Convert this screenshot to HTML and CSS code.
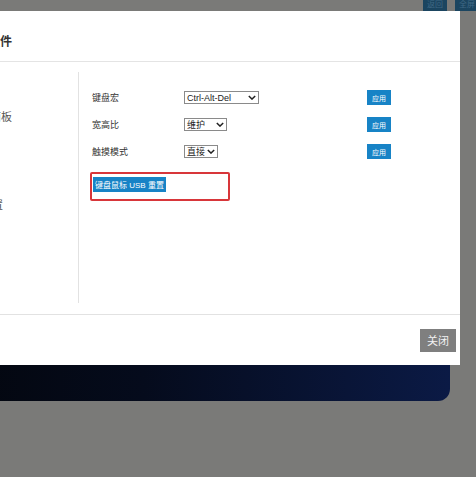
FILE: index.html
```html
<!DOCTYPE html>
<html lang="zh">
<head>
<meta charset="utf-8">
<link rel="stylesheet" href="styles.css">
</head>
<body>
<div class="page">
  <div class="topbar">
    <span class="tb-btn b1">返回</span>
    <span class="tb-btn b2">全屏</span>
  </div>
  <div class="modal">
    <div class="modal-head"><span class="title">控制台组件</span></div>
    <div class="modal-body">
      <ul class="side">
        <li>控制面板</li>
        <li>键盘</li>
        <li class="sub">高级设置</li>
      </ul>
      <div class="main">
        <div class="row">
          <span class="label">键盘宏</span>
          <div class="sel w1"><span>Ctrl-Alt-Del</span><svg viewBox="0 0 10 6" class="chev"><path d="M1 1 L5 5 L9 1" /></svg></div>
          <button class="apply">应用</button>
        </div>
        <div class="row">
          <span class="label">宽高比</span>
          <div class="sel w2"><span>维护</span><svg viewBox="0 0 10 6" class="chev"><path d="M1 1 L5 5 L9 1" /></svg></div>
          <button class="apply">应用</button>
        </div>
        <div class="row">
          <span class="label">触摸模式</span>
          <div class="sel w3"><span>直接</span><svg viewBox="0 0 10 6" class="chev"><path d="M1 1 L5 5 L9 1" /></svg></div>
          <button class="apply">应用</button>
        </div>
        <div class="highlight">
          <button class="usb">键盘鼠标 USB 重置</button>
        </div>
      </div>
    </div>
    <div class="modal-foot">
      <button class="close">关闭</button>
    </div>
  </div>
  <div class="panel"></div>
</div>
</body>
</html>
```

FILE: styles.css
```css
* { box-sizing: border-box; }
html, body {
  margin: 0;
  padding: 0;
  background: #7a7a78;
  overflow: hidden;
  font-family: "Liberation Sans", "Noto Sans CJK SC", sans-serif;
}
.page {
  width: 476px;
  height: 477px;
  overflow: hidden;
}
.topbar {
  height: 11px;
  display: flex;
  justify-content: flex-end;
  align-items: flex-end;
  gap: 8px;
  margin-right: -3px;
  overflow: hidden;
}
.tb-btn {
  flex: none;
  width: 24px;
  height: 20px;
  background: #1b4560;
  color: #3f6884;
  font-size: 8px;
  line-height: 28px;
  text-align: center;
  overflow: hidden;
}
.modal {
  margin-left: -62px;
  width: 522px;
  background: #fff;
}
.modal-head {
  height: 51px;
  padding: 21px 0 0 14px;
  border-bottom: 1px solid #e4e4e4;
}
.title {
  font-size: 12px;
  line-height: 16px;
  font-weight: bold;
  color: #333;
}
.modal-body {
  display: flex;
  padding: 10px 0 11px 0;
  border-bottom: 1px solid #e2e2e2;
}
.side {
  list-style: none;
  margin: 0;
  padding: 23px 0 0 0;
  width: 141px;
  height: 231px;
  border-right: 1px solid #e2e2e2;
}
.side li {
  height: 44px;
  line-height: 44px;
  padding-left: 30px;
  font-size: 11px;
  color: #555;
  white-space: nowrap;
}
.side li.sub { padding-left: 21px; }
.main {
  flex: 1;
  padding: 12px 0 0 11px;
}
.row {
  display: grid;
  grid-template-columns: 92px 183px auto;
  align-items: center;
  height: 27px;
  padding-left: 2px;
}
.label {
  font-size: 9px;
  color: #333;
}
.sel {
  display: flex;
  align-items: center;
  justify-content: space-between;
  height: 13px;
  border: 1px solid #8a8a8a;
  padding: 0 2px 0 2px;
  font-size: 9px;
  color: #222;
  background: #fff;
}
.w1 { width: 75px; }
.w2 { width: 43px; }
.w3 { width: 34px; }
.chev {
  width: 8px;
  height: 5px;
  fill: none;
  stroke: #222;
  stroke-width: 1.8;
}
.apply {
  width: 24px;
  height: 15px;
  padding: 0;
  border: none;
  background: #1783c6;
  color: #fff;
  font-family: inherit;
  font-size: 7px;
}
.highlight {
  margin-top: 7px;
  width: 140px;
  height: 29px;
  border: 2px solid #d8363a;
  border-radius: 2px;
  padding: 3px 0 0 1px;
}
.usb {
  display: block;
  height: 15px;
  padding: 0 2px;
  border: none;
  background: #1783c6;
  color: #fff;
  font-family: inherit;
  font-size: 8px;
  white-space: nowrap;
}
.modal-foot {
  height: 50px;
  display: flex;
  justify-content: flex-end;
  align-items: center;
  padding-right: 4px;
}
.close {
  width: 36px;
  height: 23px;
  padding: 0;
  border: none;
  background: #7f7f7f;
  color: #f2f2f2;
  font-family: inherit;
  font-size: 11px;
}
.panel {
  margin-left: -62px;
  width: 512px;
  height: 36px;
  border-radius: 0 0 12px 0;
  background: linear-gradient(90deg, #03060d 0%, #050b1c 40%, #0b1a45 100%);
}
```
